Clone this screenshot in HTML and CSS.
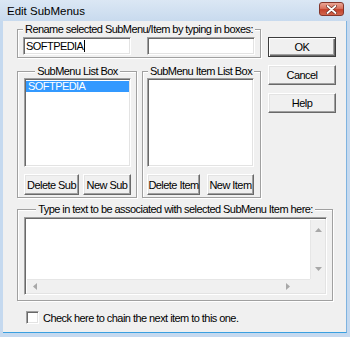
FILE: index.html
```html
<!DOCTYPE html>
<html lang="en">
  <head>
    <meta charset="UTF-8" />
    <title>Edit SubMenus</title>
    <link rel="stylesheet" href="styles.css">
  </head>
  <body>
    <div class="window">
      <div class="titlebar">
        <span class="title">Edit SubMenus</span>
        <span class="close-btn">
          <svg width="11" height="9" viewBox="0 0 11 9">
            <path d="M1.5 1 L9.5 8 M9.5 1 L1.5 8" stroke="#6b2a20" stroke-width="3.2" stroke-linecap="round" />
            <path d="M1.5 1 L9.5 8 M9.5 1 L1.5 8" stroke="#fff" stroke-width="1.8" stroke-linecap="round" />
          </svg>
        </span>
      </div>

      <div class="frame">
        <div class="client">
          <div class="top">
            <div class="left-col">
              <div class="group rename-group">
                <div class="group-label">Rename selected SubMenu/Item by typing in boxes:</div>
                <div class="rename-row">
                  <div class="field">SOFTPEDIA<span class="caret"></span></div>
                  <div class="field"></div>
                </div>
              </div>

              <div class="lists">
                <div class="group list-group sub-group">
                  <div class="group-label">SubMenu List Box</div>
                  <div class="listbox">
                    <div class="list-item selected">SOFTPEDIA</div>
                  </div>
                  <div class="btn-row">
                    <button class="btn del-sub">Delete Sub</button>
                    <button class="btn new-sub">New Sub</button>
                  </div>
                </div>

                <div class="group list-group item-group">
                  <div class="group-label">SubMenu Item List Box</div>
                  <div class="listbox"></div>
                  <div class="btn-row">
                    <button class="btn del-item">Delete Item</button>
                    <button class="btn new-item">New Item</button>
                  </div>
                </div>
              </div>
            </div>

            <div class="side">
              <button class="btn side-btn default">OK</button>
              <button class="btn side-btn">Cancel</button>
              <button class="btn side-btn">Help</button>
            </div>
          </div>

          <div class="group memo-group">
            <div class="group-label">Type in text to be associated with selected SubMenu Item here:</div>
            <div class="memo">
              <div class="memo-text"></div>
              <div class="vscroll">
                <svg width="7" height="4" viewBox="0 0 7 4"><polygon points="0,4 7,4 3.5,0" fill="#a8a8a8" /></svg>
                <svg width="7" height="4" viewBox="0 0 7 4"><polygon points="0,0 7,0 3.5,4" fill="#a8a8a8" /></svg>
              </div>
              <div class="hscroll">
                <svg width="4" height="7" viewBox="0 0 4 7"><polygon points="4,0 4,7 0,3.5" fill="#a8a8a8" /></svg>
                <svg width="4" height="7" viewBox="0 0 4 7"><polygon points="0,0 0,7 4,3.5" fill="#a8a8a8" /></svg>
              </div>
              <div class="corner"></div>
            </div>
          </div>

          <label class="check-row">
            <span class="checkbox"></span>
            Check here to chain the next item to this one.
          </label>
        </div>
      </div>
    </div>
  </body>
</html>
```

FILE: styles.css
```css
body {
  margin: 0;
  font-family: "Liberation Sans", Arial, sans-serif;
  font-size: 11px;
  letter-spacing: -0.55px;
  color: #000;
  background: #fff;
}
.window {
  width: 350px;
  height: 337px;
  display: flex;
  flex-direction: column;
  background: #c5d9ef;
}
.titlebar {
  height: 21px;
  display: flex;
  align-items: center;
  justify-content: space-between;
  padding: 0 6px 0 7px;
  background: linear-gradient(#dbe7f4, #c8daee);
  box-sizing: border-box;
}
.title {
  font-size: 11.5px;
  letter-spacing: 0;
  color: #000;
  margin-top: 1px;
}
.close-btn {
  width: 25px;
  height: 14px;
  margin-top: -3px;
  box-sizing: border-box;
  border: 1px solid #84362b;
  border-radius: 3px;
  background: linear-gradient(#eaa595, #d9735f 45%, #c4412b 55%, #d0664e);
  display: flex;
  align-items: center;
  justify-content: center;
}
.frame {
  flex: 1;
  padding: 0 3px 4px 3px;
  display: flex;
}
.client {
  flex: 1;
  background: #f0f0f0;
  border-right: 1px solid #7eb3e0;
  border-bottom: 1px solid #3aa0e0;
  padding: 0 0 0 14px;
}
.top {
  display: flex;
  align-items: flex-start;
  gap: 7px;
}
.left-col {
  width: 244px;
}

/* etched group boxes */
.group {
  border: 1px solid #a0a0a0;
  box-shadow: inset 1px 1px 0 #fff, 1px 1px 0 #fff;
  box-sizing: border-box;
}
.group-label {
  display: table;
  margin: -8px auto 0;
  padding: 0 2px;
  height: 14px;
  line-height: 14px;
  background: #f0f0f0;
  white-space: nowrap;
}
.rename-group {
  margin-top: 8px;
  height: 29px;
  padding: 0 5px 0 5px;
}
.rename-row {
  display: flex;
  justify-content: space-between;
  margin-top: 1px;
}
.field,
.listbox,
.memo {
  background: #fff;
  border: 1px solid;
  border-color: #a0a0a0 #fff #fff #a0a0a0;
  box-shadow: inset 1px 1px 0 #696969, inset -1px -1px 0 #e3e3e3;
  box-sizing: border-box;
}
.field {
  width: 108px;
  height: 18px;
  padding: 0 2px;
  line-height: 16px;
  display: flex;
  align-items: center;
}
.caret {
  width: 1px;
  height: 12px;
  background: #000;
  margin-left: 1px;
}

.lists {
  display: flex;
  justify-content: space-between;
  margin-top: 13px;
}
.list-group {
  height: 127px;
  padding: 0 5px 0 6px;
}
.sub-group {
  width: 120px;
}
.item-group {
  width: 119px;
  padding-left: 4px;
}
.listbox {
  width: 107px;
  height: 89px;
  padding: 2px 1px;
}
.list-item {
  height: 11px;
  line-height: 11px;
  padding-left: 2px;
}
.list-item.selected {
  background: #3399ff;
  color: #fff;
}
.btn-row {
  display: flex;
  justify-content: space-between;
  width: 107px;
  margin-top: 7px;
}

/* classic raised buttons */
.btn {
  font-family: inherit;
  font-size: 11px;
  letter-spacing: -0.55px;
  color: #000;
  height: 21px;
  padding: 0;
  background: #f0f0f0;
  border: 1px solid;
  border-color: #fff #696969 #696969 #fff;
  box-shadow: inset -1px -1px 0 #a0a0a0, inset 1px 1px 0 #e3e3e3;
  box-sizing: border-box;
  white-space: nowrap;
}
.del-sub { width: 55px; }
.new-sub { width: 48px; }
.del-item { width: 53px; }
.new-item { width: 47px; }

.side {
  display: flex;
  flex-direction: column;
  gap: 8px;
  padding-top: 16px;
}
.side-btn {
  width: 68px;
  height: 20px;
}
.side-btn.default {
  border-color: #3c3c3c;
  box-shadow: inset 1px 1px 0 #fff, inset -1px -1px 0 #696969, inset -2px -2px 0 #a0a0a0;
}

.memo-group {
  width: 316px;
  height: 92px;
  margin-top: 11px;
  padding: 0 5px 0 6px;
}
.memo {
  margin-top: 1px;
  height: 78px;
  display: grid;
  grid-template-columns: 1fr 15px;
  grid-template-rows: 1fr 14px;
  padding: 2px 1px 1px 2px;
}
.memo-text {
  background: #fff;
}
.vscroll {
  background: #f0f0f0;
  border-left: 1px solid #e6e6e6;
  display: flex;
  flex-direction: column;
  justify-content: space-between;
  align-items: center;
  padding: 8px 0 8px;
}
.hscroll {
  background: #f0f0f0;
  border-top: 1px solid #e6e6e6;
  display: flex;
  justify-content: space-between;
  align-items: center;
  padding: 0 20px 0 6px;
}
.corner {
  background: #f0f0f0;
}

.check-row {
  display: flex;
  align-items: center;
  gap: 4px;
  height: 13px;
  margin: 10px 0 0 9px;
}
.checkbox {
  width: 13px;
  height: 13px;
  box-sizing: border-box;
  background: #fff;
  border: 1px solid;
  border-color: #a0a0a0 #fff #fff #a0a0a0;
  box-shadow: inset 1px 1px 0 #696969, inset -1px -1px 0 #e3e3e3;
}
```
